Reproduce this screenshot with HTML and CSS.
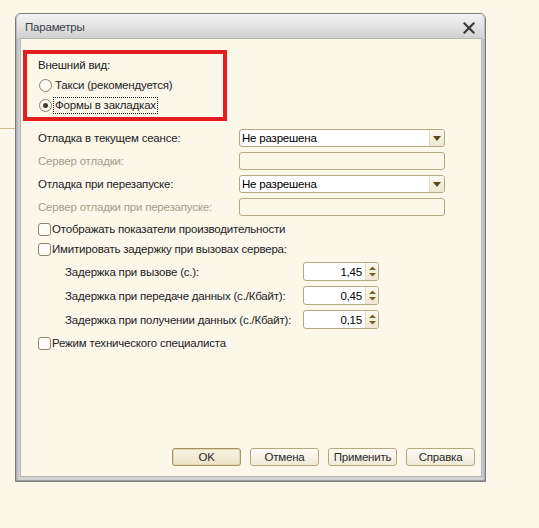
FILE: index.html
```html
<!DOCTYPE html>
<html lang="ru">
<head>
<meta charset="utf-8">
<title>Параметры</title>
<link rel="stylesheet" href="styles.css">
</head>
<body>
<div class="dialog">
  <div class="titlebar">
    <span class="title">Параметры</span>
    <svg class="close" width="12" height="12" viewBox="0 0 12 12"><path d="M1.5 1.5 L10.5 10.5 M10.5 1.5 L1.5 10.5" stroke="#3a3a3a" stroke-width="2.2" stroke-linecap="square"/></svg>
  </div>
  <div class="body">
    <div class="highlight"></div>
    <div class="group">
      <div class="line">Внешний вид:</div>
      <div class="line opt"><span class="radio"></span><span class="opt-text">Такси (рекомендуется)</span></div>
      <div class="line opt"><span class="radio checked"></span><span class="opt-text focus">Формы в закладках</span></div>
    </div>

    <div class="fields">
      <div class="frow">
        <span class="label">Отладка в текущем сеансе:</span>
        <div class="combo"><span class="combo-text">Не разрешена</span><span class="combo-btn"><svg width="8" height="5" viewBox="0 0 8 5"><path d="M0 0 H8 L4 5 Z" fill="#5b4714"/></svg></span></div>
      </div>
      <div class="frow">
        <span class="label disabled">Сервер отладки:</span>
        <div class="input"></div>
      </div>
      <div class="frow">
        <span class="label">Отладка при перезапуске:</span>
        <div class="combo"><span class="combo-text">Не разрешена</span><span class="combo-btn"><svg width="8" height="5" viewBox="0 0 8 5"><path d="M0 0 H8 L4 5 Z" fill="#5b4714"/></svg></span></div>
      </div>
      <div class="frow">
        <span class="label disabled">Сервер отладки при перезапуске:</span>
        <div class="input"></div>
      </div>
    </div>

    <div class="checks">
      <div class="crow"><span class="cbox"></span><span>Отображать показатели производительности</span></div>
      <div class="crow"><span class="cbox"></span><span>Имитировать задержку при вызовах сервера:</span></div>
    </div>

    <div class="delays">
      <div class="drow">
        <span class="dlabel">Задержка при вызове (с.):</span>
        <div class="spin"><span class="spin-val">1,45</span><span class="spin-btn"><svg width="7" height="11" viewBox="0 0 7 11"><path d="M0 4 L3.5 0.5 L7 4 Z M0 7 L3.5 10.5 L7 7 Z" fill="#7a6322"/></svg></span></div>
      </div>
      <div class="drow">
        <span class="dlabel">Задержка при передаче данных (с./Кбайт):</span>
        <div class="spin"><span class="spin-val">0,45</span><span class="spin-btn"><svg width="7" height="11" viewBox="0 0 7 11"><path d="M0 4 L3.5 0.5 L7 4 Z M0 7 L3.5 10.5 L7 7 Z" fill="#7a6322"/></svg></span></div>
      </div>
      <div class="drow">
        <span class="dlabel">Задержка при получении данных (с./Кбайт):</span>
        <div class="spin"><span class="spin-val">0,15</span><span class="spin-btn"><svg width="7" height="11" viewBox="0 0 7 11"><path d="M0 4 L3.5 0.5 L7 4 Z M0 7 L3.5 10.5 L7 7 Z" fill="#7a6322"/></svg></span></div>
      </div>
    </div>

    <div class="checks last">
      <div class="crow"><span class="cbox"></span><span>Режим технического специалиста</span></div>
    </div>

    <div class="spacer"></div>

    <div class="buttons">
      <span class="btn default">OK</span>
      <span class="btn">Отмена</span>
      <span class="btn">Применить</span>
      <span class="btn">Справка</span>
    </div>
  </div>
</div>
</body>
</html>
```

FILE: styles.css
```css
html, body {
  margin: 0;
  padding: 0;
}
body {
  background: #fbf8ea linear-gradient(#cbbb8c, #cbbb8c) no-repeat 0 128px / 16px 1px;
  font-family: "Liberation Sans", Arial, sans-serif;
  font-size: 11.5px;
  letter-spacing: -0.2px;
  color: #222;
  width: 539px;
  height: 528px;
  padding-top: 13px;
  box-sizing: border-box;
  white-space: nowrap;
}
.dialog {
  margin-left: 15px;
  width: 471px;
  height: 469px;
  box-sizing: border-box;
  border: 1px solid #7c7c7c;
  border-radius: 6px 6px 0 0;
  background: linear-gradient(90deg, #a9a9a9 0, #c9c9c9 2px, #d4d4d4 4px, #d4d4d4 calc(100% - 4px), #c9c9c9 calc(100% - 2px), #a9a9a9 100%);
  display: flex;
  flex-direction: column;
  box-shadow: inset 0 -1px 0 #9a9a9a;
}
.titlebar {
  height: 25px;
  flex: none;
  display: flex;
  align-items: center;
  justify-content: space-between;
  padding: 1px 10px 0 9px;
  box-sizing: border-box;
  border-radius: 5px 5px 0 0;
  background: linear-gradient(#f4f4f4 0, #e6e6e6 40%, #cfcfcf 100%);
  box-shadow: inset 1px 0 0 #bdbdbd, inset -1px 0 0 #bdbdbd;
}
.title {
  color: #3b3d4a;
}
.close {
  display: block;
  margin-top: 1px;
}
.body {
  position: relative;
  flex: 1;
  margin: 0 4px 5px 5px;
  background: #fbf8ea;
  box-shadow: 0 0 0 1px #b4b4b4;
  display: flex;
  flex-direction: column;
  padding: 16px 6px 0 17px;
  box-sizing: border-box;
}
.highlight {
  position: absolute;
  left: 2px;
  top: 11px;
  width: 204px;
  height: 71px;
  box-sizing: border-box;
  border: 4px solid #e31c1f;
  pointer-events: none;
}
.group .line {
  height: 20px;
  display: flex;
  align-items: center;
}
.group .opt {
  margin-left: 1px;
}
.radio {
  width: 13px;
  height: 13px;
  box-sizing: border-box;
  border-radius: 50%;
  border: 1px solid #8f8668;
  background: radial-gradient(circle, #ffffff 0, #f4f1e4 100%);
  display: flex;
  align-items: center;
  justify-content: center;
  flex: none;
}
.radio.checked::after {
  content: "";
  width: 5px;
  height: 5px;
  border-radius: 50%;
  background: #3d3a30;
}
.opt-text {
  margin-left: 1px;
  line-height: 15px;
  padding: 0 1px;
  border: 1px solid transparent;
}
.opt-text.focus {
  border: 1px dotted #222;
}
.fields {
  margin-top: 14px;
  display: flex;
  flex-direction: column;
  gap: 5px;
}
.frow {
  display: flex;
  align-items: center;
  height: 18px;
}
.label {
  width: 201px;
  flex: none;
}
.label.disabled {
  color: #a49e88;
}
.combo, .input {
  width: 206px;
  height: 18px;
  box-sizing: border-box;
  border: 1px solid #b5a97f;
  border-radius: 3px;
  display: flex;
  align-items: center;
}
.combo {
  background: #fff;
}
.input {
  background: #fbf8ea;
}
.combo-text {
  flex: 1;
  padding-left: 2px;
  color: #000;
}
.combo-btn {
  width: 14px;
  align-self: stretch;
  display: flex;
  align-items: center;
  justify-content: center;
  background: linear-gradient(#fbf9f0, #ede7d1);
  border-left: 1px solid #e4dcc2;
  border-radius: 0 2px 2px 0;
}
.checks {
  margin-top: 3px;
}
.checks.last {
  margin-top: 4px;
}
.crow {
  display: flex;
  align-items: center;
  height: 20px;
}
.cbox {
  width: 13px;
  height: 13px;
  box-sizing: border-box;
  border: 1px solid #8f8668;
  border-radius: 3px;
  background: #fdfcf6;
  margin-right: 1px;
  flex: none;
}
.delays {
  margin-top: 3px;
  display: flex;
  flex-direction: column;
  gap: 5px;
}
.drow {
  display: flex;
  align-items: center;
  height: 19px;
  padding-left: 27px;
}
.dlabel {
  width: 238px;
  flex: none;
}
.spin {
  width: 76px;
  height: 19px;
  box-sizing: border-box;
  border: 1px solid #b5a97f;
  border-radius: 3px;
  background: #fff;
  display: flex;
  align-items: center;
}
.spin-val {
  flex: 1;
  text-align: right;
  padding-right: 3px;
  color: #000;
}
.spin-btn {
  width: 12px;
  align-self: stretch;
  display: flex;
  align-items: center;
  justify-content: center;
  background: linear-gradient(#fbf9f0, #ede7d1);
  border-left: 1px solid #e4dcc2;
  border-radius: 0 2px 2px 0;
}
.spacer {
  flex: 1;
}
.buttons {
  display: flex;
  justify-content: flex-end;
  gap: 9px;
  margin-bottom: 10px;
}
.btn {
  width: 69px;
  height: 18px;
  box-sizing: border-box;
  border: 1px solid #b4a87e;
  border-radius: 3px;
  background: linear-gradient(#fdfcf6, #efead6);
  display: flex;
  align-items: center;
  justify-content: center;
  color: #2a2a2a;
}
.btn.default {
  border-color: #a29463;
  box-shadow: inset 0 0 0 1px #e0d6b0;
  background: linear-gradient(#f8f4e3, #ebe3c6);
}
```
